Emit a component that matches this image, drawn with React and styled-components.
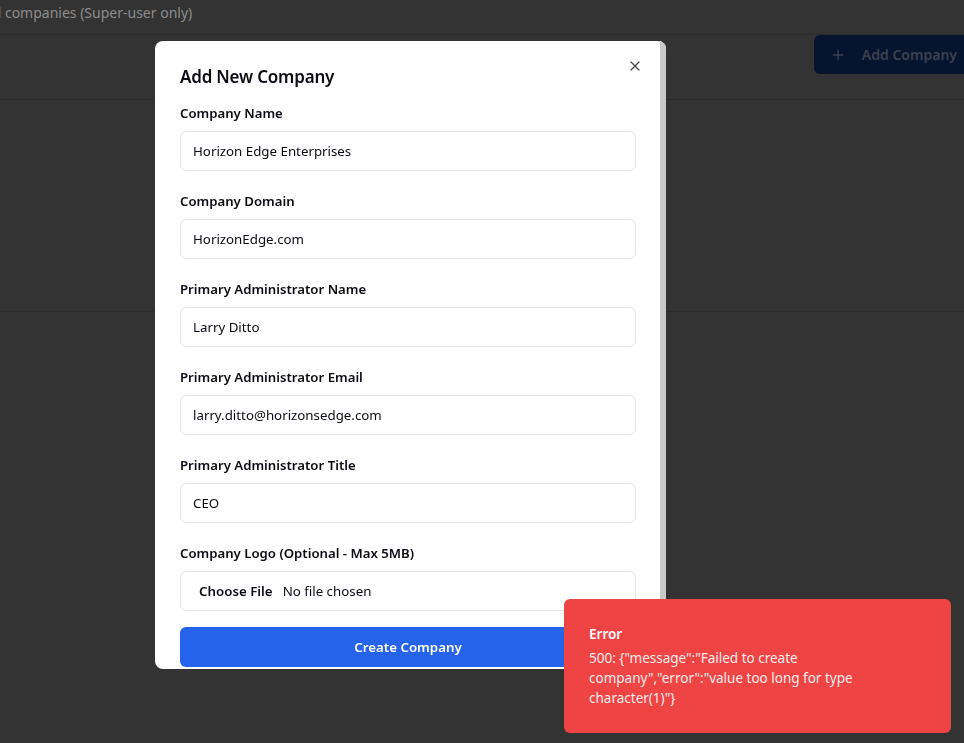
import styled, { createGlobalStyle } from 'styled-components'
import { X, Plus } from 'lucide-react'

const Global = createGlobalStyle`
  html, body { margin: 0; padding: 0; }
  body {
    background: #333333;
    font-family: "Noto Sans", "Open Sans", sans-serif;
    overflow: hidden;
  }
`

const Page = styled.div`
  height: 743px;
  width: 964px;
  overflow: hidden;
  background: #333333;
`

const Header = styled.div`
  height: 34px;
  border-bottom: 1px solid #2c2c2c;
  display: flex;
  align-items: center;
  overflow: hidden;
`

const Subtitle = styled.p`
  margin: 0 0 0 -71px;
  font-size: 14px;
  color: #8d8d8d;
  white-space: nowrap;
  padding-bottom: 10px;
`

const Toolbar = styled.div`
  height: 64px;
  border-bottom: 1px solid #2c2c2c;
  display: flex;
  justify-content: flex-end;
  overflow: hidden;
`

const AddButton = styled.div`
  height: 39px;
  margin-right: -17px;
  padding: 0 24px 0 16px;
  background: #07142f;
  border-radius: 6px;
  display: flex;
  align-items: center;
  gap: 16px;
  color: #3b4250;
  font-size: 14px;
  font-weight: 600;
  white-space: nowrap;
`

const ContentArea = styled.div`
  height: 211px;
  border-bottom: 1px solid #2c2c2c;
`

const Modal = styled.div`
  position: fixed;
  left: 155px;
  top: 41px;
  width: 511px;
  height: 628px;
  background: #ffffff;
  border-radius: 8px;
  overflow: hidden;
  display: flex;
`

const ModalBody = styled.div`
  flex: 1;
  padding: 24px 24px 24px 25px;
`

const ScrollTrack = styled.div`
  width: 6px;
  background: #f1f1f1;
  display: flex;
  flex-direction: column;
`

const ScrollThumb = styled.div`
  height: 97%;
  background: #c9c9c9;
`

const CloseButton = styled.button`
  position: absolute;
  top: 17px;
  right: 23px;
  border: none;
  background: none;
  padding: 0;
  display: flex;
  color: #444;
`

const Title = styled.h2`
  margin: 0 0 14px;
  font-size: 17px;
  line-height: 24px;
  font-weight: 600;
  color: #0b0b14;
  letter-spacing: -0.2px;
`

const Field = styled.div`
  display: flex;
  flex-direction: column;
  gap: 8px;
  margin-bottom: 20px;
`

const Label = styled.label`
  font-size: 13.2px;
  line-height: 20px;
  font-weight: 600;
  color: #0b0b14;
`

const Input = styled.div`
  height: 40px;
  box-sizing: border-box;
  border: 1px solid #e4e4e7;
  border-radius: 6px;
  display: flex;
  align-items: center;
  font-size: 13.3px;
  color: #0b0b14;
  gap: ${(p) => (p.$file ? '10px' : '0')};
  padding: 0 12px 0 ${(p) => (p.$file ? '18px' : '12px')};
`

const FileButton = styled.span`
  font-weight: 600;
`

const Submit = styled.button`
  margin-top: -4px;
  width: 100%;
  height: 40px;
  border: none;
  border-radius: 6px;
  background: #2563eb;
  color: #ffffff;
  font-family: inherit;
  font-size: 13.3px;
  font-weight: 600;
`

const Toast = styled.div`
  position: fixed;
  left: 564px;
  top: 599px;
  width: 387px;
  height: 134px;
  box-sizing: border-box;
  background: #ef4444;
  border-radius: 6px;
  padding: 24px 32px 24px 25px;
  color: #ffffff;
  display: flex;
  flex-direction: column;
  justify-content: center;
  gap: 4px;
`

const ToastTitle = styled.div`
  font-size: 13.5px;
  line-height: 20px;
  font-weight: 600;
`

const ToastText = styled.div`
  font-size: 13.5px;
  line-height: 20px;
  opacity: 0.9;
`

const fields = [
  ['Company Name', 'Horizon Edge Enterprises'],
  ['Company Domain', 'HorizonEdge.com'],
  ['Primary Administrator Name', 'Larry Ditto'],
  ['Primary Administrator Email', 'larry.ditto@horizonsedge.com'],
  ['Primary Administrator Title', 'CEO'],
]

export default function App() {
  return (
    <>
      <Global />
      <Page>
        <Header>
          <Subtitle>Manage all companies (Super-user only)</Subtitle>
        </Header>
        <Toolbar>
          <AddButton>
            <Plus size={16} strokeWidth={2} />
            Add Company
          </AddButton>
        </Toolbar>
        <ContentArea />
      </Page>

      <Modal>
        <CloseButton>
          <X size={16} strokeWidth={1.8} />
        </CloseButton>
        <ModalBody>
          <Title>Add New Company</Title>
          {fields.map(([label, value]) => (
            <Field key={label}>
              <Label>{label}</Label>
              <Input>{value}</Input>
            </Field>
          ))}
          <Field>
            <Label>Company Logo (Optional - Max 5MB)</Label>
            <Input $file>
              <FileButton>Choose File</FileButton>
              No file chosen
            </Input>
          </Field>
          <Submit>Create Company</Submit>
        </ModalBody>
        <ScrollTrack>
          <ScrollThumb />
        </ScrollTrack>
      </Modal>

      <Toast>
        <ToastTitle>Error</ToastTitle>
        <ToastText>
          500: {'{"message":"Failed to create company","error":"value too long for type character(1)"}'}
        </ToastText>
      </Toast>
    </>
  )
}
